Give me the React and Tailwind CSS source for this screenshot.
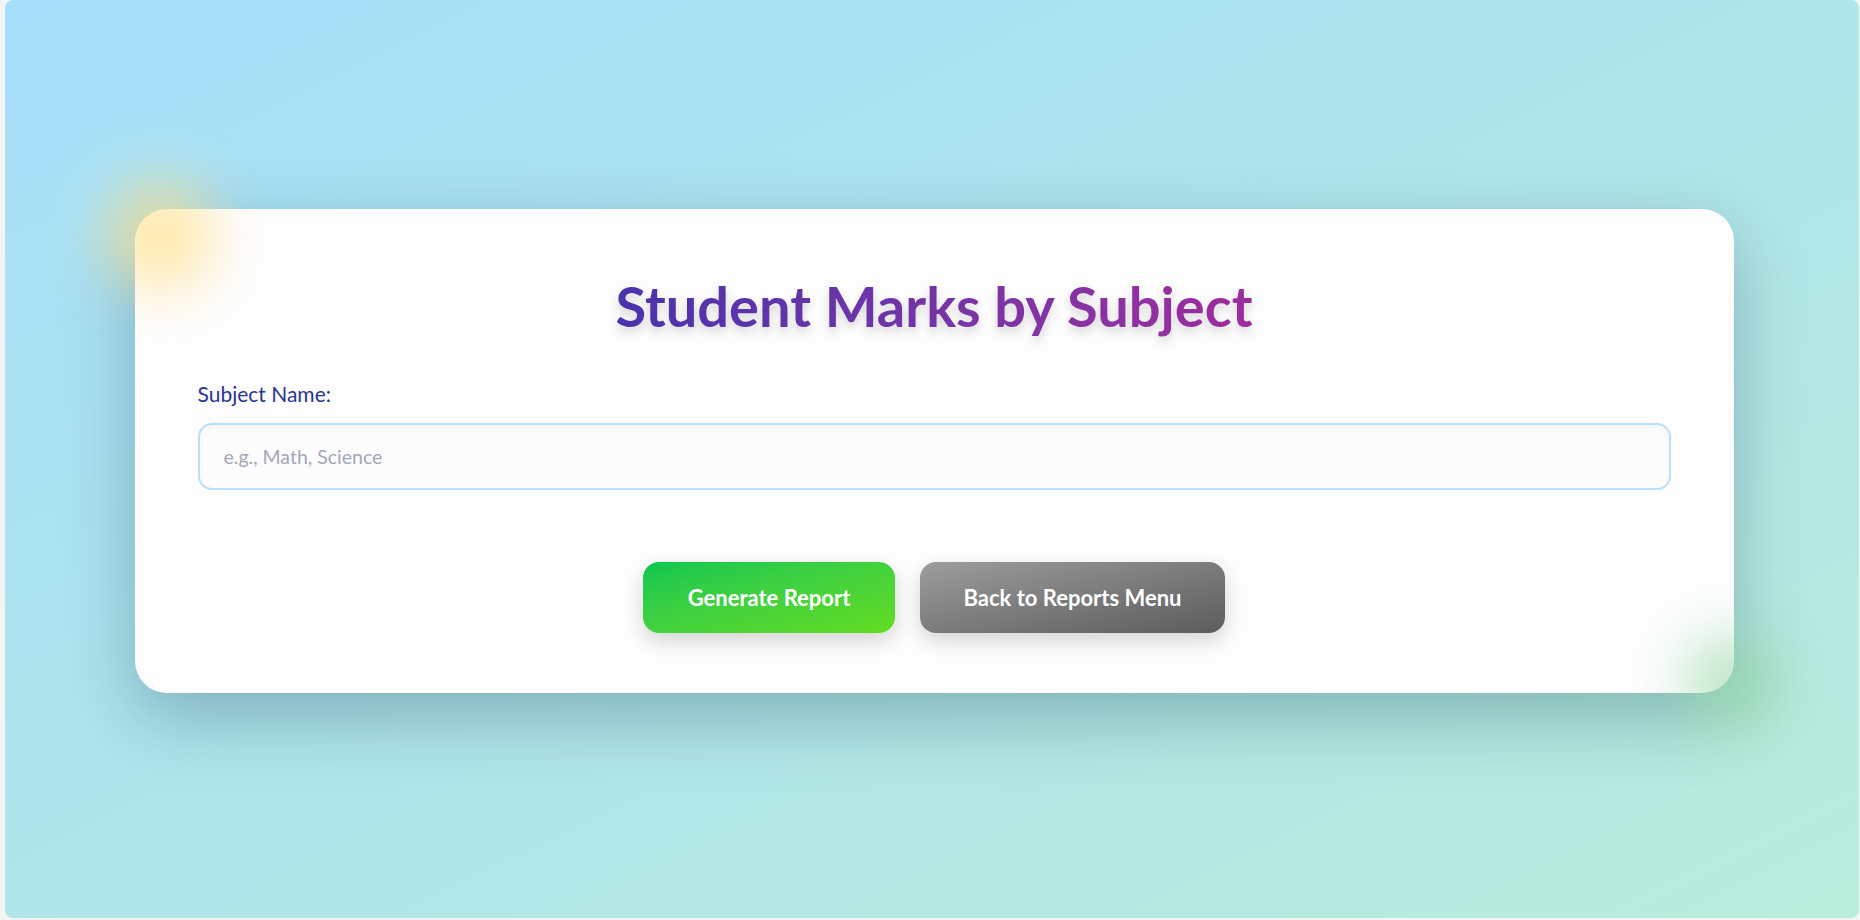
export default function App() {
  return (
    <div className="min-h-screen bg-[#f4f4f4] pl-[5px] pr-[1px] pb-[2px]" style={{ fontFamily: "Lato, 'Noto Sans', sans-serif" }}>
      {/* page */}
      <div className="h-[918px] rounded-lg bg-linear-to-br from-[#a5def9] to-[#b9eddc] flex justify-center pt-[209px] pl-[4px]">
        {/* card */}
        <div className="relative w-[1599px] h-[484px] rounded-[32px] bg-[#fdfdfe] shadow-[0_24px_70px_rgba(0,40,60,0.28)] px-[63px] pt-[62px]">
          {/* glows */}
          <div className="absolute -left-[30px] -top-[28px] w-[110px] h-[110px] rounded-full bg-[#ffe08a] opacity-70 blur-[28px]" />
          <div className="absolute -right-[50px] -bottom-[42px] w-[100px] h-[100px] rounded-full bg-[#92d6a2] opacity-60 blur-[28px]" />

          <div className="relative">
            <h1 className="flex justify-center h-[70px]">
              <span className="block text-[56px] leading-[70px] font-bold bg-linear-to-r from-[#4932ad] to-[#9e2b9e] bg-clip-text text-transparent drop-shadow-[0_5px_5px_rgba(0,0,0,0.16)]">
                Student Marks by Subject
              </span>
            </h1>

            <label className="block mt-[40px] text-[21px] leading-[26px] text-[#283593]">Subject Name:</label>
            <input
              type="text"
              placeholder="e.g., Math, Science"
              className="block mt-[16px] w-full h-[67px] rounded-[14px] border-2 border-[#bbdefb] bg-[#fcfcfd] px-[24px] text-[19.5px] text-gray-700 placeholder:text-[#a3a7b5] shadow-[inset_0_2px_5px_rgba(0,0,0,0.04)] outline-none"
            />

            <div className="mt-[72px] flex justify-center gap-[25px]">
              <button className="w-[252px] h-[71px] rounded-[16px] bg-linear-to-br from-[#05c74f] to-[#62dd1c] text-white text-[22px] font-bold shadow-[0_8px_20px_rgba(0,0,0,0.16)]">
                Generate Report
              </button>
              <button className="w-[305px] h-[71px] rounded-[16px] bg-linear-to-br from-[#9d9d9d] to-[#5c5c5c] text-white text-[22px] font-bold shadow-[0_8px_20px_rgba(0,0,0,0.16)]">
                Back to Reports Menu
              </button>
            </div>
          </div>
        </div>
      </div>
    </div>
  );
}
